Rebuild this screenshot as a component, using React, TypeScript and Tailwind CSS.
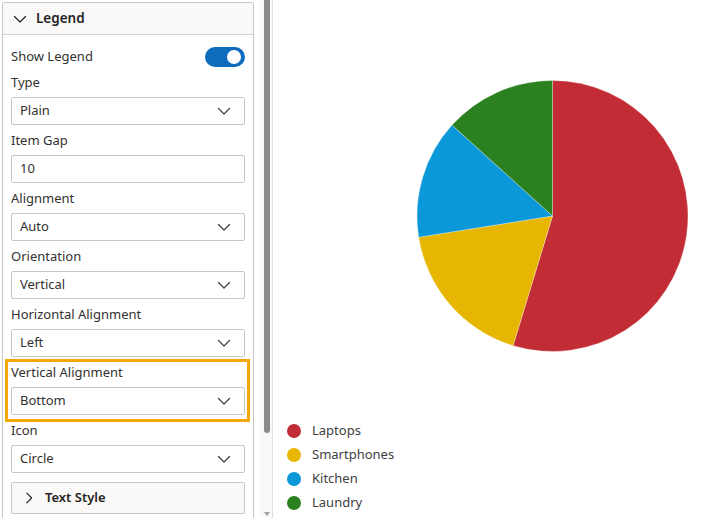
import React from "react";

interface Slice {
  label: string;
  value: number;
  color: string;
}

const slices: Slice[] = [
  { label: "Laptops", value: 54.7, color: "#c22d35" },
  { label: "Smartphones", value: 17.8, color: "#e6b602" },
  { label: "Kitchen", value: 14.2, color: "#0b98d9" },
  { label: "Laundry", value: 13.3, color: "#2b8120" },
];

const font = { fontFamily: '"Noto Sans", "Open Sans", sans-serif' };

const ChevronDown = ({ className = "" }: { className?: string }) => (
  <svg viewBox="0 0 16 16" className={className} fill="none" stroke="currentColor" strokeWidth={1.3}>
    <path d="M2.5 5.5 8 11l5.5-5.5" strokeLinecap="round" strokeLinejoin="round" />
  </svg>
);

const ChevronRight = ({ className = "" }: { className?: string }) => (
  <svg viewBox="0 0 16 16" className={className} fill="none" stroke="currentColor" strokeWidth={1.3}>
    <path d="M5.5 2.5 11 8l-5.5 5.5" strokeLinecap="round" strokeLinejoin="round" />
  </svg>
);

const Field = ({ label, value, dropdown = true }: { label: string; value: string; dropdown?: boolean }) => (
  <div className="flex flex-col">
    <div className="h-[20px] leading-[20px] text-[13px] text-[#323130]">{label}</div>
    <div className="mt-[5px] flex h-[28px] items-center justify-between rounded-[2px] border border-[#c8c6c4] bg-white pl-[8px] pr-[12px] text-[13px] text-[#323130]">
      <span>{value}</span>
      {dropdown && <ChevronDown className="h-[16px] w-[16px] text-[#444]" />}
    </div>
  </div>
);

const PieChart = () => {
  const cx = 552.5;
  const cy = 216;
  const r = 135.5;
  const total = slices.reduce((s, d) => s + d.value, 0);
  let start = 0;
  const point = (a: number) => [cx + r * Math.sin(a), cy - r * Math.cos(a)];
  return (
    <svg width={431} height={518} viewBox="273 0 431 518" className="block">
      {slices.map((d) => {
        const a0 = (start / total) * Math.PI * 2;
        start += d.value;
        const a1 = (start / total) * Math.PI * 2;
        const [x0, y0] = point(a0);
        const [x1, y1] = point(a1);
        const large = a1 - a0 > Math.PI ? 1 : 0;
        return (
          <path
            key={d.label}
            d={`M${cx} ${cy} L${x0} ${y0} A${r} ${r} 0 ${large} 1 ${x1} ${y1} Z`}
            fill={d.color}
            stroke="#ffffff"
            strokeWidth={0.3}
          />
        );
      })}
    </svg>
  );
};

export default function App() {
  return (
    <div className="flex h-[518px] w-[704px] overflow-hidden bg-white" style={font}>
      {/* property panel */}
      <div className="flex h-full w-[273px] shrink-0">
        <div className="w-[260px] shrink-0 pl-[2px] pt-[2px]">
          <div className="h-[540px] w-[252px] rounded-t-[2px] border border-[#c8c6c4] bg-white">
            <div className="flex h-[32px] items-center border-b border-[#d1d1d1] bg-[#faf9f8] pl-[9px] text-[13.5px] font-semibold text-[#242424]">
              <ChevronDown className="h-[16px] w-[16px] text-[#242424]" />
              <span className="ml-[8px]">Legend</span>
            </div>
            <div className="flex flex-col gap-[5px] px-[8px] pt-[11px]">
              <div className="flex h-[21px] items-center justify-between text-[13px] text-[#323130]">
                <span>Show Legend</span>
                <div className="flex h-[20px] w-[40px] items-center justify-end rounded-full bg-[#0f6cbd] pr-[4px]">
                  <div className="h-[14px] w-[14px] rounded-full bg-white" />
                </div>
              </div>
              <Field label="Type" value="Plain" />
              <Field label="Item Gap" value="10" dropdown={false} />
              <Field label="Alignment" value="Auto" />
              <Field label="Orientation" value="Vertical" />
              <Field label="Horizontal Alignment" value="Left" />
              <div className="relative">
                <Field label="Vertical Alignment" value="Bottom" />
                <span className="pointer-events-none absolute -bottom-[7px] -left-[6px] -right-[5px] -top-[3px] border-[3px] border-[#f4a80a]" />
              </div>
              <Field label="Icon" value="Circle" />
              <div className="mt-[4px] flex h-[32px] items-center rounded-[2px] border border-[#c8c6c4] bg-[#faf9f8] pl-[10px] text-[13px] font-semibold text-[#242424]">
                <ChevronRight className="h-[14px] w-[14px]" />
                <span className="ml-[9px]">Text Style</span>
              </div>
            </div>
          </div>
        </div>
        {/* scrollbar */}
        <div className="relative h-full w-[13px] border-r border-[#e1e1e1] bg-[#f9f9f9]">
          <div className="ml-[4px] h-[433px] w-[6px] rounded-b-[3px] bg-[#8a8a8a]" />
          <div className="absolute bottom-[2px] left-[4px] h-0 w-0 border-x-[3px] border-t-[4px] border-x-transparent border-t-[#a0a0a0]" />
        </div>
      </div>

      {/* chart */}
      <div className="relative flex-1">
        <PieChart />
        <div className="absolute left-[14px] top-[419px] flex flex-col">
          {slices.map((d) => (
            <div key={d.label} className="flex h-[24px] items-center">
              <span className="h-[14px] w-[14px] rounded-full" style={{ backgroundColor: d.color }} />
              <span className="ml-[11px] text-[13px] text-[#404040]">{d.label}</span>
            </div>
          ))}
        </div>
      </div>
    </div>
  );
}
